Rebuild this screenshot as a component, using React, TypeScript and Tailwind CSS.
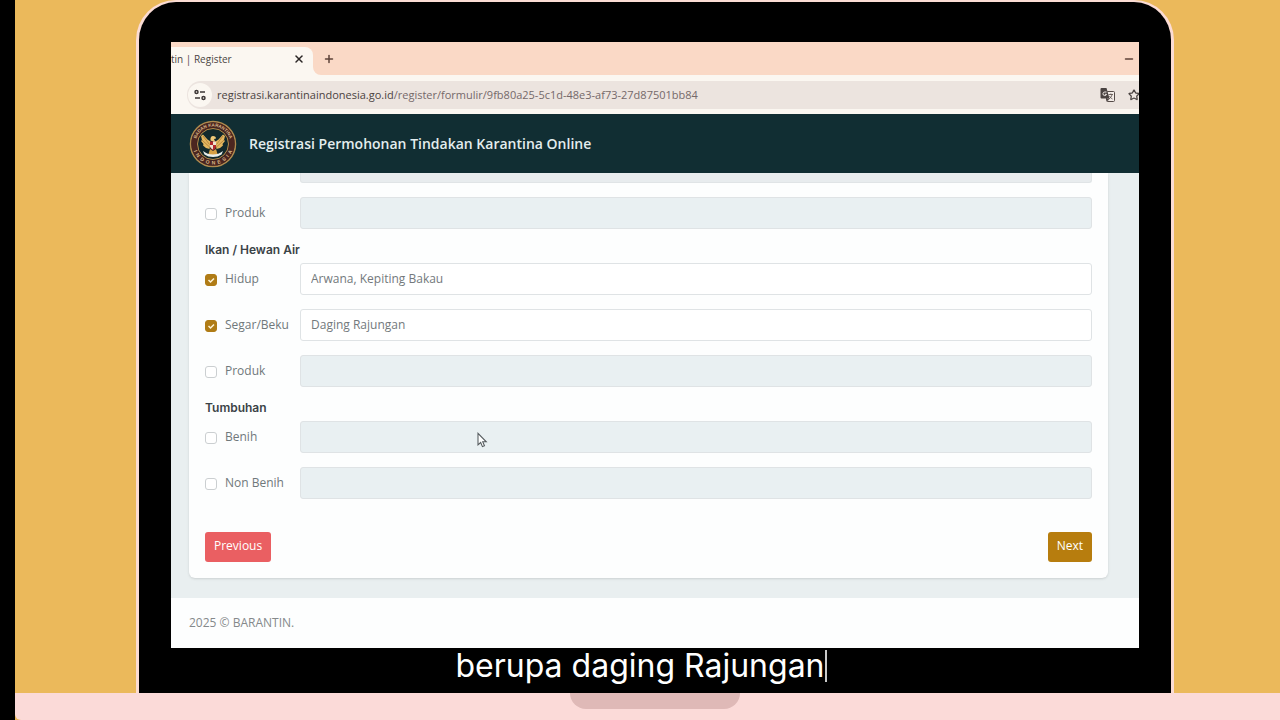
import { useId } from 'react';
import { Plus, X, Minus, Star } from 'lucide-react';

type Field = {
  label: string;
  checked?: boolean;
  value?: string;
};

type Group = {
  title: string;
  fields: Field[];
};

const groups: Group[] = [
  {
    title: 'Ikan / Hewan Air',
    fields: [
      { label: 'Hidup', checked: true, value: 'Arwana, Kepiting Bakau' },
      { label: 'Segar/Beku', checked: true, value: 'Daging Rajungan' },
      { label: 'Produk' },
    ],
  },
  {
    title: 'Tumbuhan',
    fields: [{ label: 'Benih' }, { label: 'Non Benih' }],
  },
];

function Logo() {
  return (
    <svg viewBox="0 0 96 96" className="size-12 shrink-0" role="img" aria-label="Badan Karantina Indonesia">
      <defs>
        <path id="arc-top" d="M13 48a35 35 0 0 1 70 0" />
        <path id="arc-bottom" d="M7 48a41 41 0 0 0 82 0" />
      </defs>
      <circle cx="48" cy="48" r="45" fill="#3b2220" stroke="#b08a4e" strokeWidth="3" />
      <circle cx="48" cy="48" r="38" fill="none" stroke="#4c2620" strokeWidth="10" />
      <circle cx="48" cy="48" r="31" fill="#12292c" stroke="#b98c4a" strokeWidth="2" />
      <g fill="#d9b98a" fontFamily="Liberation Sans, sans-serif" fontSize="9" fontWeight="700">
        <text textAnchor="middle">
          <textPath href="#arc-top" startOffset="50%">BADAN KARANTINA</textPath>
        </text>
        <text textAnchor="middle" fontSize="10">
          <textPath href="#arc-bottom" startOffset="50%">I&#160; N&#160; D&#160; O&#160; N&#160; E&#160; S&#160; I&#160; A</textPath>
        </text>
      </g>
      {/* wings */}
      <path d="M43 43 37 39 28 29 24 32 26 40 24 42 29 48 28 51 34 56 41 58z" fill="#e3b65f" />
      <path d="M53 43 59 39 68 29 72 32 70 40 72 42 67 48 68 51 62 56 55 58z" fill="#e3b65f" />
      <path d="M28 32 41 49M26 40 40 53M68 32 55 49M70 40 56 53" stroke="#a87531" strokeWidth="1.500" />
      {/* head, shield and tail */}
      <path d="M43 41q-1-9 5-9 6 0 6 5l-4 1 3 7z" fill="#efc877" />
      <path d="M42 43h12v11q-1 5-6 7-5-2-6-7z" fill="#b3262b" />
      <path d="M48 43h6v7h-6zM42 50h6v9q-5-2-6-6z" fill="#eee2cf" />
      <path d="m42 58 6 4 6-4 3 10-9 5-9-5z" fill="#d6a044" />
      <path d="M28 62q9 7 20 7t20-7l-3 7q-7 5-17 5t-17-5z" fill="#e8eeea" />
    </svg>
  );
}

function TranslateIcon() {
  return (
    <svg viewBox="0 0 16 16" className="size-4 shrink-0" aria-hidden="true">
      <rect x="6.500" y="4.500" width="8" height="10" rx="1" fill="#f3ece8" stroke="#554b48" />
      <path d="M1.500 1h5l3 10.500h-8A1 1 0 0 1 .5 10.500V2a1 1 0 0 1 1-1z" fill="#4a4341" />
      <path d="M6.500 5H4.800a1.800 1.800 0 1 0 1.700 2.300H4.800" fill="none" stroke="#f3ece8" />
      <path d="M8.500 7.500h4.500M10.800 6.500v1M12 7.500c-.3 2-1.500 3.500-3 4.500M9.500 9c.5 1.300 1.500 2.300 3 3" fill="none" stroke="#554b48" strokeWidth=".8" />
      <path d="m7.500 14.500 2-3H6.500z" fill="#4a4341" />
    </svg>
  );
}

function BrowserBar() {
  return (
    <div className="bg-[#fbf7f1] font-['Open_Sans','Noto_Sans',sans-serif]">
      <div className="flex h-[33px] bg-[#fad9c6] pt-[5px]">
        <div className="relative flex w-[142px] items-center justify-between rounded-tr-lg bg-[#fbf7f1] pr-2 pb-1 text-[10px] font-medium text-[#4b4543]">
          <span className="whitespace-nowrap">tin | Register</span>
          <button type="button" aria-label="Close tab" className="text-[#2b2726]">
            <X className="size-3" strokeWidth={3} />
          </button>
          <svg viewBox="0 0 8 8" className="absolute bottom-0 left-full size-2" aria-hidden="true">
            <path d="M0 0v8h8a8 8 0 0 1-8-8z" fill="#fbf7f1" />
          </svg>
        </div>
        <button type="button" aria-label="New tab" className="ml-2.5 pb-1 text-[#5d4238]">
          <Plus className="size-3" strokeWidth={3} />
        </button>
        <button type="button" aria-label="Minimize" className="mr-1 ml-auto pb-1 text-[#5d4238]">
          <Minus className="size-3" strokeWidth={3} />
        </button>
      </div>
      <div className="flex h-[39px] pt-1.5 pb-[5px] pl-4">
        <div className="flex flex-1 items-center overflow-hidden rounded-l-full bg-[#ece4df] pl-px">
          <button type="button" aria-label="Site information" className="flex size-6 items-center justify-center rounded-full bg-[#fbf7f1]">
            <svg viewBox="0 0 12 12" className="size-3" fill="none" stroke="#3d3735" strokeWidth="1.500" aria-hidden="true">
              <circle cx="2.500" cy="3" r="1.500" />
              <path d="M6 3h5M1 9h5" />
              <circle cx="9.500" cy="9" r="1.500" />
            </svg>
          </button>
          <span className="ml-[5px] flex-1 text-[11px] whitespace-nowrap text-[#75696a]">
            <span className="text-[#4b4341]">registrasi.karantinaindonesia.go.id</span>
            /register/formulir/9fb80a25-5c1d-48e3-af73-27d87501bb84
          </span>
          <button type="button" aria-label="Translate this page">
            <TranslateIcon />
          </button>
          <button type="button" aria-label="Bookmark this page" className="-mr-px ml-3 text-[#4a4341]">
            <Star className="size-3" strokeWidth={2.5} />
          </button>
        </div>
      </div>
    </div>
  );
}

function FieldRow({ label, checked = false, value = '' }: Field) {
  const id = useId();

  return (
    <div className="mb-3.5 flex h-8 items-center">
      <div className="flex w-[95px] shrink-0 items-center gap-2">
        <span className="mt-0.5 grid size-3 shrink-0">
          <input
            id={id}
            type="checkbox"
            defaultChecked={checked}
            className="peer col-start-1 row-start-1 size-3 appearance-none rounded-[3px] border border-[#cbcfd1] bg-white checked:border-[#b07c16] checked:bg-[#b07c16]"
          />
          <svg viewBox="0 0 12 12" className="pointer-events-none invisible col-start-1 row-start-1 size-3 peer-checked:visible" aria-hidden="true">
            <path d="m3.500 6 2 2 3.500-3.500" fill="none" stroke="#fff3d6" strokeWidth="1.500" />
          </svg>
        </span>
        <label htmlFor={id} className="pb-px text-[12px] font-medium whitespace-nowrap text-[#70787b]">
          {label}
        </label>
      </div>
      <input
        type="text"
        aria-label={`${label} detail`}
        defaultValue={value}
        disabled={!checked}
        className="h-8 min-w-0 flex-1 rounded-[3px] border border-[#dfe3e5] bg-white px-2.5 pb-0.5 text-[12px] text-[#73797c] disabled:bg-[#e9f0f2]"
      />
    </div>
  );
}

function Cursor() {
  return (
    <svg viewBox="0 0 12 18" className="pointer-events-none absolute top-[259px] left-[287px] h-4 w-3" aria-hidden="true">
      <path d="M1.500 1.500v13l3-2.700 2 4.700 2.300-1-2-4.500h4z" fill="#fdfefe" stroke="#555b5e" strokeWidth="1.200" />
    </svg>
  );
}

export default function App() {
  return (
    <div className="flex min-h-screen flex-col overflow-hidden border-l-[15px] border-black bg-[#ebb95b] font-['Open_Sans','Noto_Sans',sans-serif]">
      {/* laptop lid */}
      <div className="mr-[106px] ml-[121px] flex flex-1 flex-col rounded-t-[40px] border-x-[3px] border-t-2 border-[#fbdcd4] bg-black px-8 pt-10">
        <div className="flex flex-1 flex-col overflow-hidden bg-[#e9eff0]">
          <BrowserBar />

          <header className="flex h-[59px] items-center gap-3 bg-[#112e33] pt-px pl-[18px]">
            <Logo />
            <h1 className="pb-0.5 text-[14px] font-semibold text-[#e3edee]">Registrasi Permohonan Tindakan Karantina Online</h1>
          </header>

          <main className="flex-1 pr-[31px] pb-5 pl-[18px]">
            <form className="relative rounded-b-md bg-[#fdfefe] px-4 pb-4 shadow-sm" onSubmit={(e) => e.preventDefault()}>
              {/* row scrolled under the header */}
              <div className="mb-3.5 ml-[95px] h-2.5 rounded-b-[3px] border border-t-0 border-[#e0e4e6] bg-[#e8ecee]" />
              <FieldRow label="Produk" />

              {groups.map((group) => (
                <section key={group.title}>
                  <h2 className="mb-1.5 font-['Inter',sans-serif] text-[12px] leading-[14px] font-semibold text-[#3b4347]">{group.title}</h2>
                  {group.fields.map((field) => (
                    <FieldRow key={field.label} {...field} />
                  ))}
                </section>
              ))}

              <div className="flex justify-between pt-[19px] text-[12px] text-white">
                <button type="button" className="h-[30px] rounded-[3px] bg-[#ea5f62] px-[9px] pb-0.5">
                  Previous
                </button>
                <button type="submit" className="h-[30px] rounded-[3px] bg-[#b77d0e] px-[9px] pb-0.5">
                  Next
                </button>
              </div>
              <Cursor />
            </form>
          </main>

          <footer className="flex h-[50px] items-center bg-[#fdfefe] pl-[18px] text-[12px] text-[#85898b]">2025 © BARANTIN.</footer>
        </div>

        <p className="flex h-[45px] items-center justify-center pr-7 pb-2.5 font-['Inter',sans-serif] text-[32px] leading-9 whitespace-nowrap text-white">
          berupa daging Rajungan
          <span className="h-8 w-0.5 bg-[#c9c9c9]" />
        </p>
      </div>

      {/* laptop base */}
      <div className="h-[27px] rounded-bl-md bg-[#fbdad8]">
        <div className="mr-[540px] ml-[555px] h-4 rounded-b-2xl bg-[#dfb9b7]" />
      </div>
    </div>
  );
}
